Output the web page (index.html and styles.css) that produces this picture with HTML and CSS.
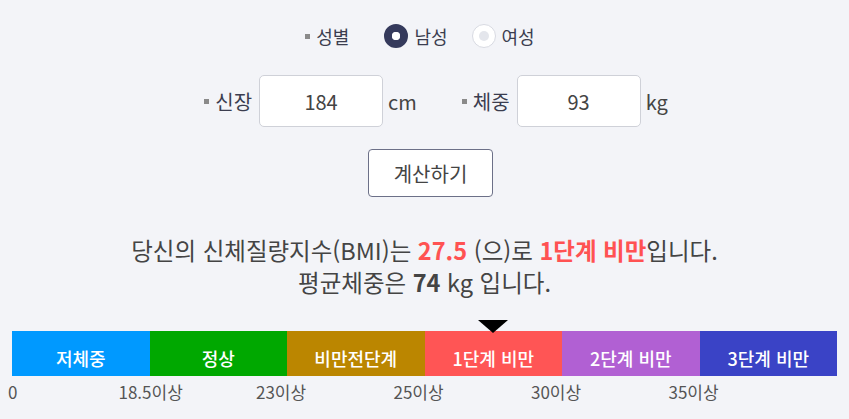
FILE: index.html
```html
<!DOCTYPE html>
<html lang="ko">
<head>
  <meta charset="UTF-8">
  <title>BMI 계산기</title>
  <link rel="stylesheet" href="styles.css">
</head>
<body>

  <div class="form">
    <div class="row gender-row">
      <span class="label">성별</span>
      <label class="radio checked"><span class="dot"></span>남성</label>
      <label class="radio"><span class="dot"></span>여성</label>
    </div>

    <div class="row size-row">
      <span class="label">신장</span>
      <input type="text" class="num" value="184">
      <span class="unit">cm</span>
      <span class="label second">체중</span>
      <input type="text" class="num" value="93">
      <span class="unit">kg</span>
    </div>

    <div class="row btn-row">
      <button class="calc">계산하기</button>
    </div>
  </div>

  <div class="result">
    당신의 신체질량지수(BMI)는 <b class="red">27.5</b> (으)로 <b class="red">1단계 비만</b>입니다.<br>
    평균체중은 <b>74</b> kg 입니다.
  </div>

  <div class="scale">
    <div class="bar">
      <div class="marker" style="left: 58.33%;"></div>
      <div class="seg s1">저체중</div>
      <div class="seg s2">정상</div>
      <div class="seg s3">비만전단계</div>
      <div class="seg s4">1단계 비만</div>
      <div class="seg s5">2단계 비만</div>
      <div class="seg s6">3단계 비만</div>
    </div>
    <div class="ticks">
      <span class="first">0</span>
      <span>18.5이상</span>
      <span>23이상</span>
      <span>25이상</span>
      <span>30이상</span>
      <span>35이상</span>
    </div>
  </div>

</body>
</html>
```

FILE: styles.css
```css
body {
  margin: 0;
  font-family: "Noto Sans CJK KR", "Noto Sans", sans-serif;
  background: #f3f4f8;
  color: #444;
}

.form {
  display: flex;
  flex-direction: column;
  align-items: center;
  padding-top: 24px;
}

.row {
  display: flex;
  align-items: center;
}

.label {
  display: flex;
  align-items: center;
  gap: 6px;
  font-size: 18px;
  color: #3b3d4f;
}

.label::before {
  content: "";
  width: 5px;
  height: 5px;
  background: #8a8a8a;
}

.gender-row {
  height: 24px;
  padding-right: 9px;
}

.radio {
  display: flex;
  align-items: center;
  gap: 6px;
  font-size: 18px;
  color: #3b3d4f;
  margin-left: 35px;
}

.radio + .radio {
  margin-left: 24px;
}

.dot {
  width: 24px;
  height: 24px;
  box-sizing: border-box;
  border-radius: 50%;
  border: 1px solid #d8dae2;
  background: #fff;
  display: flex;
  align-items: center;
  justify-content: center;
}

.dot::after {
  content: "";
  width: 10px;
  height: 10px;
  border-radius: 50%;
  background: #e4e6ec;
}

.checked .dot {
  border: 8px solid #353a5c;
}

.checked .dot::after {
  width: 8px;
  height: 8px;
  background: #fff;
}

.size-row {
  margin-top: 27px;
  padding-left: 23px;
}

.size-row .label {
  font-size: 20px;
}

.num {
  width: 124px;
  height: 52px;
  box-sizing: border-box;
  margin-left: 7px;
  border: 1px solid #cfd1d8;
  border-radius: 5px;
  background: #fff;
  font-family: inherit;
  font-size: 20px;
  color: #444;
  text-align: center;
  outline: none;
}

.unit {
  font-size: 20px;
  margin-left: 5px;
  color: #444;
}

.second {
  margin-left: 45px;
}

.btn-row {
  margin-top: 22px;
  padding-left: 12px;
}

.calc {
  width: 125px;
  height: 48px;
  background: #fff;
  border: 1px solid #6c7088;
  border-radius: 4px;
  font-family: inherit;
  font-size: 20px;
  color: #444;
  cursor: pointer;
}

.result {
  margin-top: 37px;
  text-align: center;
  font-size: 23.5px;
  line-height: 32px;
  color: #444;
}

.result b {
  font-weight: bold;
}

.red {
  color: #ff5252;
}

.scale {
  margin: 22px 12px 0;
  padding-top: 11px;
}

.bar {
  position: relative;
  display: flex;
  height: 45px;
}

.marker {
  position: absolute;
  top: -11px;
  width: 0;
  height: 0;
  margin-left: -15px;
  border-left: 15px solid transparent;
  border-right: 15px solid transparent;
  border-top: 13px solid #000;
}

.seg {
  flex: 1;
  display: flex;
  align-items: center;
  justify-content: center;
  padding-top: 8px;
  box-sizing: border-box;
  color: #fff;
  font-size: 18px;
  font-weight: 500;
}

.s1 { background: #0099ff; }
.s2 { background: #00a800; }
.s3 { background: #bb8600; }
.s4 { background: #ff5555; }
.s5 { background: #b160d3; }
.s6 { background: #3a43c6; }

.ticks {
  display: flex;
  margin-top: 6px;
  font-size: 17px;
  line-height: 20px;
  color: #555;
}

.ticks span {
  flex: 1;
  margin-left: -31px;
  margin-right: 31px;
}

.ticks .first {
  margin-left: -4px;
  margin-right: 4px;
}
```
